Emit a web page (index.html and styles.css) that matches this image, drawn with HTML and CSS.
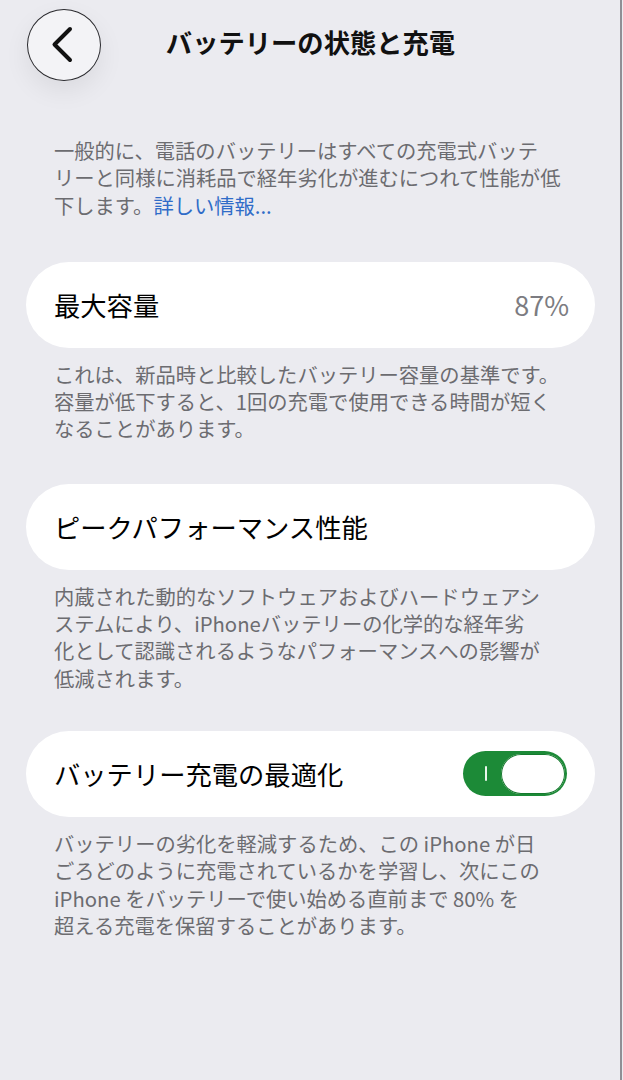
FILE: index.html
```html
<!DOCTYPE html>
<html lang="ja">
<head>
<meta charset="utf-8">
<title>バッテリーの状態と充電</title>
<link rel="stylesheet" href="styles.css">
</head>
<body>
<div class="page">
  <header class="header">
    <button class="back" aria-label="戻る">
      <svg width="72" height="72" viewBox="0 0 72 72"><path d="M42 20 L26.5 35.5 L42 51" fill="none" stroke="#111" stroke-width="4" stroke-linecap="round" stroke-linejoin="round"/></svg>
    </button>
    <h1 class="title">バッテリーの状態と充電</h1>
    <span class="spacer"></span>
  </header>
  <main class="content">
    <p class="note intro">一般的に、電話のバッテリーはすべての充電式バッテ<br>リーと同様に消耗品で経年劣化が進むにつれて性能が低<br>下します。<a class="link" href="#">詳しい情報...</a></p>

    <section class="group first">
      <div class="card"><span class="label">最大容量</span><span class="value">87%</span></div>
      <p class="note">これは、新品時と比較したバッテリー容量の基準です。<br>容量が低下すると、1回の充電で使用できる時間が短く<br>なることがあります。</p>
    </section>

    <section class="group">
      <div class="card"><span class="label">ピークパフォーマンス性能</span></div>
      <p class="note">内蔵された動的なソフトウェアおよびハードウェアシ<br>ステムにより、iPhoneバッテリーの化学的な経年劣<br>化として認識されるようなパフォーマンスへの影響が<br>低減されます。</p>
    </section>

    <section class="group third">
      <div class="card"><span class="label">バッテリー充電の最適化</span>
        <span class="switch" role="switch" aria-checked="true"><span class="mark"></span><span class="knob"></span></span>
      </div>
      <p class="note">バッテリーの劣化を軽減するため、この iPhone が日<br>ごろどのように充電されているかを学習し、次にこの<br>iPhone をバッテリーで使い始める直前まで 80% を<br>超える充電を保留することがあります。</p>
    </section>
  </main>
</div>
</body>
</html>
```

FILE: styles.css
```css
html, body {
  margin: 0;
  padding: 0;
}
body {
  background: #ebebf0;
  font-family: "Noto Sans CJK JP", "Noto Sans", sans-serif;
  color: #000;
}
.page {
  width: 622px;
  min-height: 1080px;
  border-right: 2px solid #8f8f95;
  box-sizing: border-box;
}
.header {
  height: 90px;
  display: grid;
  grid-template-columns: 72px 1fr 72px;
  padding: 0 26px 0 27px;
  align-items: start;
}
.back {
  margin-top: 9px;
  width: 74px;
  height: 72px;
  border-radius: 50%;
  border: 1.5px solid #2a2a2e;
  background: #f3f3f6;
  padding: 0;
  box-shadow: 0 10px 26px rgba(0, 0, 0, 0.07);
  display: flex;
  align-items: center;
  justify-content: center;
  box-sizing: border-box;
}
.back svg {
  display: block;
}
.title {
  margin: 0;
  margin-top: 6px;
  line-height: 72px;
  text-align: center;
  font-size: 26.3px;
  font-weight: 700;
  color: #111;
}
.content {
  padding: 0 25px 0 26px;
}
.note {
  margin: 0;
  padding: 0 0 0 28px;
  font-size: 20.3px;
  line-height: 27.3px;
  color: #6c6c70;
  white-space: nowrap;
}
.intro {
  margin-top: 47px;
}
.link {
  color: #2f6cc8;
  text-decoration: none;
}
.group {
  margin-top: 41px;
}
.group.first {
  margin-top: 43px;
}
.group.third {
  margin-top: 39px;
}
.card {
  height: 86px;
  border-radius: 43px;
  background: #fff;
  display: flex;
  align-items: center;
  justify-content: space-between;
  padding: 0 28px;
  margin-bottom: 13px;
}
.label {
  font-size: 26.3px;
  color: #000;
  line-height: 1;
}
.value {
  font-size: 27px;
  color: #7c7c81;
  line-height: 1;
  margin-right: -2px;
}
.switch {
  width: 104px;
  height: 45px;
  border-radius: 23px;
  background: #1c8a37;
  display: flex;
  align-items: center;
  padding: 0 2px 0 22px;
  box-sizing: border-box;
}
.mark {
  width: 2px;
  height: 15px;
  background: #eaf6ec;
  border-radius: 1px;
}
.knob {
  margin-left: auto;
  width: 64px;
  height: 40px;
  border-radius: 20px;
  background: #fff;
  box-shadow: inset 0 0 0 1px #167a2e;
}
```
